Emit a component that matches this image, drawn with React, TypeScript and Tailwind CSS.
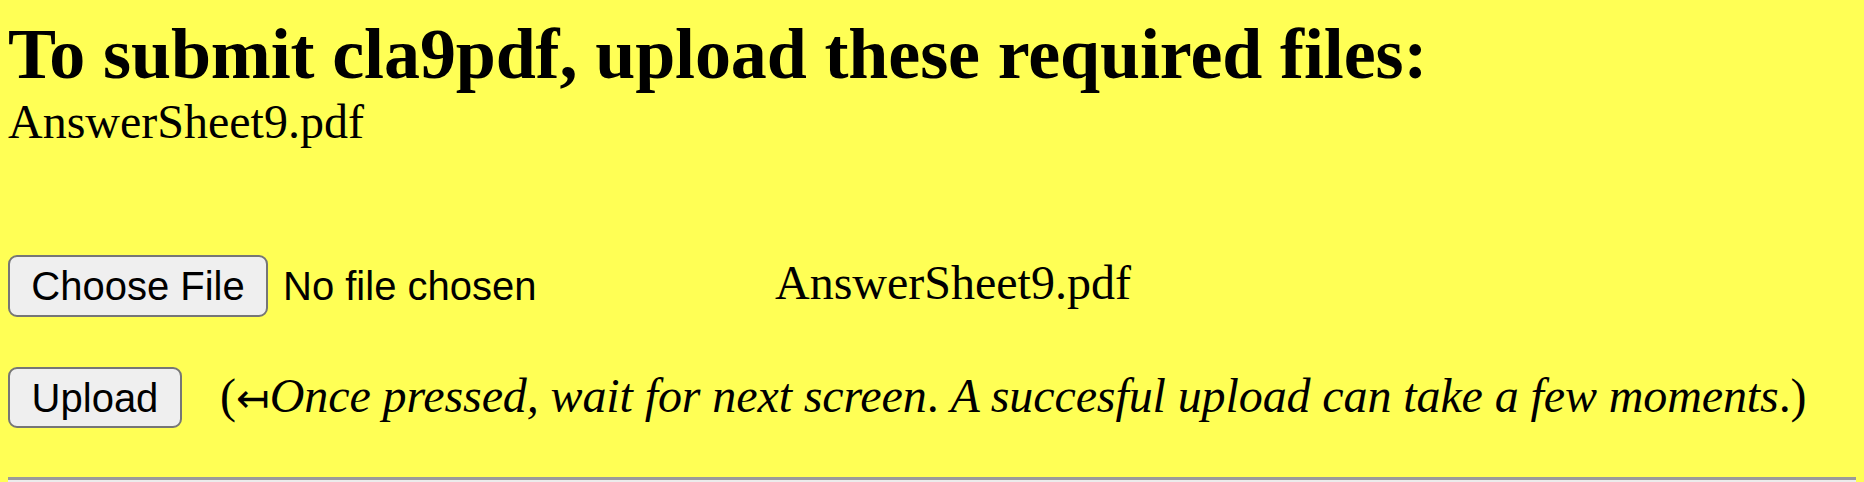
export default function App() {
  return (
    <div className="h-[482px] w-full overflow-hidden bg-[#ffff55] text-black font-['Liberation_Serif','Times_New_Roman',serif]">
      <div className="px-2 pt-[14px]">
        <h2 className="text-[72px] font-bold leading-[80px] tracking-[-0.12px]">
          To submit cla9pdf, upload these required files:
        </h2>
        <div className="text-[48px] leading-[56px]">AnswerSheet9.pdf</div>

        <div className="mt-[105px] flex items-center">
          <div className="flex w-[767px] items-center font-['Liberation_Sans',Arial,sans-serif] text-[40px]">
            <button className="h-[62px] w-[260px] rounded-[9px] border-2 border-[#767676] bg-[#efefef] leading-none">
              Choose File
            </button>
            <span className="ml-[15px] leading-none">No file chosen</span>
          </div>
          <span className="mb-[6px] text-[48px] leading-[56px]">AnswerSheet9.pdf</span>
        </div>

        <div className="mt-[50px] flex items-center">
          <button className="h-[61px] w-[174px] rounded-[9px] border-2 border-[#767676] bg-[#efefef] font-['Liberation_Sans',Arial,sans-serif] text-[40px] leading-none">
            Upload
          </button>
          <span className="ml-[38px] text-[48px] leading-[56px] tracking-[-0.1px]">
            (<span className="text-[40px]">↤</span>
            <i>Once pressed, wait for next screen</i>.{" "}
            <i>A succesful upload can take a few moments</i>.)
          </span>
        </div>

        <div className="mt-[49px] h-[20px] border-t-[3px] border-[#9a9a9a] bg-[#ececec]" />
      </div>
    </div>
  );
}
